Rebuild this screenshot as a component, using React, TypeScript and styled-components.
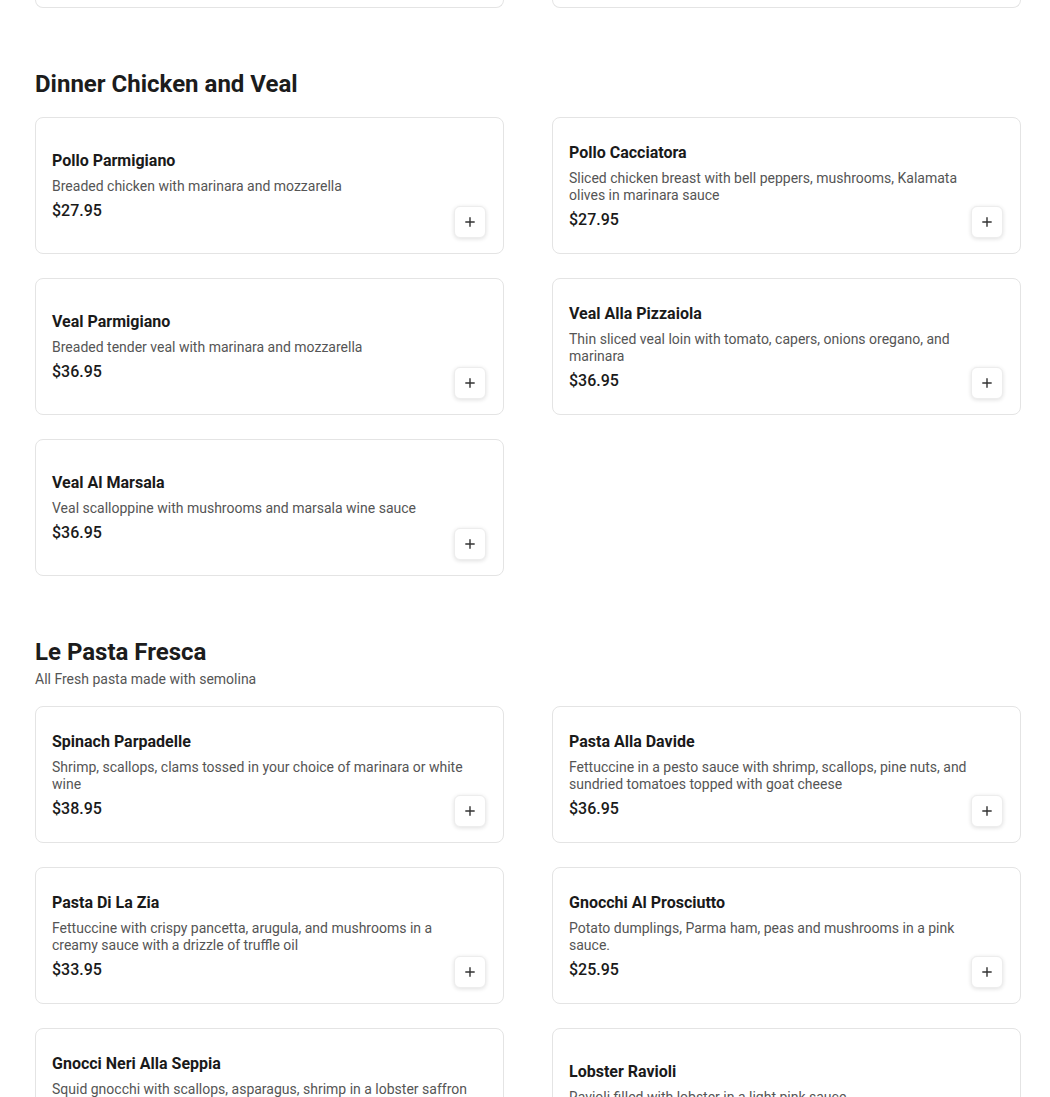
import React from "react";
import styled, { createGlobalStyle } from "styled-components";

const GlobalStyle = createGlobalStyle`
  html, body {
    margin: 0;
    padding: 0;
    background: #ffffff;
  }
  body {
    font-family: Roboto, "Noto Sans", "Liberation Sans", sans-serif;
    color: #1a1a1a;
  }
  * { box-sizing: border-box; }
`;

const Page = styled.main`
  padding: 0 29px 40px 35px;
`;

const TailRow = styled.div`
  display: grid;
  grid-template-columns: 1fr 1fr;
  column-gap: 48px;
`;

const CardTail = styled.div`
  height: 8px;
  border: 1px solid #e4e4e4;
  border-top: none;
  border-radius: 0 0 8px 8px;
`;

const Section = styled.section`
  margin-top: 64px;
`;

const SectionTitle = styled.h2`
  margin: 0;
  font-size: 24px;
  line-height: 24px;
  font-weight: 700;
  color: #1c1c1c;
`;

const SectionSubtitle = styled.p`
  margin: 6px 0 0;
  font-size: 14px;
  line-height: 18px;
  color: #555555;
`;

const Grid = styled.div<{ $hasSub?: boolean }>`
  display: grid;
  grid-template-columns: 1fr 1fr;
  column-gap: 48px;
  row-gap: 24px;
  margin-top: ${(p) => (p.$hasSub ? "18px" : "21px")};
`;

const Card = styled.article`
  position: relative;
  display: flex;
  align-items: center;
  min-height: 137px;
  padding: 17px 16px 16px;
  border: 1px solid #e4e4e4;
  border-radius: 8px;
  background: #ffffff;
`;

const Info = styled.div`
  display: flex;
  flex-direction: column;
  max-width: 418px;
`;

const ItemName = styled.h3`
  margin: 0 0 7px;
  font-size: 16px;
  line-height: 20px;
  font-weight: 700;
  color: #1a1a1a;
`;

const ItemDesc = styled.p`
  margin: 0;
  font-size: 14px;
  line-height: 17px;
  color: #555555;
`;

const ItemPrice = styled.span`
  margin-top: 6px;
  font-size: 16px;
  line-height: 20px;
  font-weight: 500;
  color: #1a1a1a;
`;

const AddButton = styled.button`
  position: absolute;
  right: 17px;
  bottom: 15px;
  width: 32px;
  height: 32px;
  display: flex;
  align-items: center;
  justify-content: center;
  padding: 0;
  border: 1px solid #ededed;
  border-radius: 6px;
  background: #ffffff;
  box-shadow: 0 1px 4px rgba(0, 0, 0, 0.13);
  color: #333333;
  cursor: pointer;
`;

type Item = { name: string; desc: string; price: string };

const PlusIcon = () => (
  <svg width="10" height="10" viewBox="0 0 10 10" fill="none">
    <path d="M5 0.8v8.4M0.8 5h8.4" stroke="currentColor" strokeWidth="1.4" strokeLinecap="round" />
  </svg>
);

const MenuCard = ({ item }: { item: Item }) => (
  <Card>
    <Info>
      <ItemName>{item.name}</ItemName>
      <ItemDesc>{item.desc}</ItemDesc>
      <ItemPrice>{item.price}</ItemPrice>
    </Info>
    <AddButton aria-label={`Add ${item.name}`}>
      <PlusIcon />
    </AddButton>
  </Card>
);

const sections: { title: string; subtitle?: string; items: Item[] }[] = [
  {
    title: "Dinner Chicken and Veal",
    items: [
      { name: "Pollo Parmigiano", desc: "Breaded chicken with marinara and mozzarella", price: "$27.95" },
      { name: "Pollo Cacciatora", desc: "Sliced chicken breast with bell peppers, mushrooms, Kalamata olives in marinara sauce", price: "$27.95" },
      { name: "Veal Parmigiano", desc: "Breaded tender veal with marinara and mozzarella", price: "$36.95" },
      { name: "Veal Alla Pizzaiola", desc: "Thin sliced veal loin with tomato, capers, onions oregano, and marinara", price: "$36.95" },
      { name: "Veal Al Marsala", desc: "Veal scalloppine with mushrooms and marsala wine sauce", price: "$36.95" },
    ],
  },
  {
    title: "Le Pasta Fresca",
    subtitle: "All Fresh pasta made with semolina",
    items: [
      { name: "Spinach Parpadelle", desc: "Shrimp, scallops, clams tossed in your choice of marinara or white wine", price: "$38.95" },
      { name: "Pasta Alla Davide", desc: "Fettuccine in a pesto sauce with shrimp, scallops, pine nuts, and sundried tomatoes topped with goat cheese", price: "$36.95" },
      { name: "Pasta Di La Zia", desc: "Fettuccine with crispy pancetta, arugula, and mushrooms in a creamy sauce with a drizzle of truffle oil", price: "$33.95" },
      { name: "Gnocchi Al Prosciutto", desc: "Potato dumplings, Parma ham, peas and mushrooms in a pink sauce.", price: "$25.95" },
      { name: "Gnocci Neri Alla Seppia", desc: "Squid gnocchi with scallops, asparagus, shrimp in a lobster saffron sauce", price: "$38.95" },
      { name: "Lobster Ravioli", desc: "Ravioli filled with lobster in a light pink sauce", price: "$34.95" },
    ],
  },
];

export default function App() {
  return (
    <>
      <GlobalStyle />
      <Page>
        <TailRow>
          <CardTail />
          <CardTail />
        </TailRow>
        {sections.map((s) => (
          <Section key={s.title}>
            <SectionTitle>{s.title}</SectionTitle>
            {s.subtitle && <SectionSubtitle>{s.subtitle}</SectionSubtitle>}
            <Grid $hasSub={!!s.subtitle}>
              {s.items.map((it) => (
                <MenuCard key={it.name} item={it} />
              ))}
            </Grid>
          </Section>
        ))}
      </Page>
    </>
  );
}
